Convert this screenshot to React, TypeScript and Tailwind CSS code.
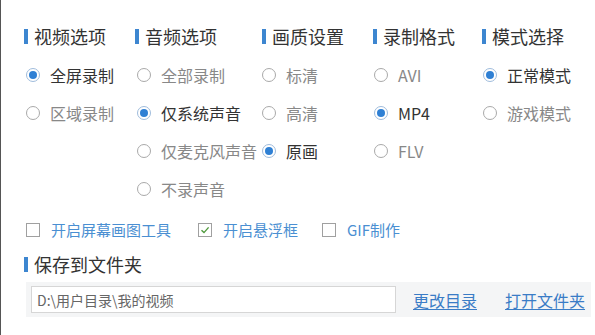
import type { ReactNode } from 'react';

const FONT = { fontFamily: '"Noto Sans CJK SC", "Noto Sans", sans-serif' };

type Col = { title: string; width: string; offset: string; items: { label: string; on?: boolean }[] };

const COLS: Col[] = [
  { title: '视频选项', width: 'w-[111px]', offset: 'pl-[2px]', items: [{ label: '全屏录制', on: true }, { label: '区域录制' }] },
  {
    title: '音频选项',
    width: 'w-[127px]',
    offset: 'pl-[2px]',
    items: [{ label: '全部录制' }, { label: '仅系统声音', on: true }, { label: '仅麦克风声音' }, { label: '不录声音' }],
  },
  { title: '画质设置', width: 'w-[111px]', offset: 'pl-[0px]', items: [{ label: '标清' }, { label: '高清' }, { label: '原画', on: true }] },
  { title: '录制格式', width: 'w-[109px]', offset: 'pl-[1px]', items: [{ label: 'AVI' }, { label: 'MP4', on: true }, { label: 'FLV' }] },
  { title: '模式选择', width: 'w-[110px]', offset: 'pl-[1px]', items: [{ label: '正常模式', on: true }, { label: '游戏模式' }] },
];

function Heading({ children }: { children: ReactNode }) {
  return (
    <div className="flex items-center h-[24px] gap-[6px]">
      <span className="w-[4px] h-[15px] bg-[#3d86d0]" />
      <span className="text-[18px] leading-[24px] text-[#333] whitespace-nowrap">{children}</span>
    </div>
  );
}

function Radio({ on }: { on?: boolean }) {
  return (
    <span
      className={`w-[14px] h-[14px] rounded-full border shrink-0 grid place-items-center bg-white ${
        on ? 'border-[#9fbcdc]' : 'border-[#a9a9a9]'
      }`}
    >
      {on && <span className="w-[8px] h-[8px] rounded-full bg-[#2f80d4]" />}
    </span>
  );
}

function Check({ on, label }: { on?: boolean; label: string }) {
  return (
    <div className="flex items-center gap-[11px]">
      <span className="w-[14px] h-[14px] border border-[#a0a0a0] bg-white grid place-items-center shrink-0">
        {on && (
          <svg width="10" height="10" viewBox="0 0 10 10">
            <path d="M1.5 5.2 L4 7.6 L8.6 2.4" fill="none" stroke="#4f9a3c" strokeWidth="1.4" />
          </svg>
        )}
      </span>
      <span className="text-[15px] leading-[24px] text-[#4a8fd2] whitespace-nowrap">{label}</span>
    </div>
  );
}

export default function App() {
  return (
    <div style={FONT} className="w-[595px] h-[335px] bg-white border-l border-[#555] overflow-hidden">
      <div className="pl-[23px] pt-[24px]">
        <div className="flex">
          {COLS.map(c => (
            <div key={c.title} className={`${c.width} shrink-0`}>
              <Heading>{c.title}</Heading>
              <div className={`mt-[8px] ${c.offset}`}>
                {c.items.map(it => (
                  <div key={it.label} className="h-[38px] flex items-center gap-[10px]">
                    <Radio on={it.on} />
                    <span
                      className={`text-[16px] leading-[20px] whitespace-nowrap ${
                        it.on ? 'text-[#333]' : 'text-[#888]'
                      }`}
                    >
                      {it.label}
                    </span>
                  </div>
                ))}
              </div>
            </div>
          ))}
        </div>

        <div className="flex items-center h-[24px] mt-[10px] pl-[2px]">
          <div className="w-[172px]">
            <Check label="开启屏幕画图工具" />
          </div>
          <div className="w-[124px]">
            <Check on label="开启悬浮框" />
          </div>
          <Check label="GIF制作" />
        </div>

        <div className="mt-[10px]">
          <Heading>保存到文件夹</Heading>
        </div>

        <div className="mt-[6px] ml-[2px] w-[565px] h-[35px] bg-[#f4f5f6] flex items-center pl-[5px]">
          <div className="w-[365px] h-[27px] bg-white border border-[#d6d6d6] flex items-center pl-[5px]">
            <span className="text-[14px] text-[#666] leading-[20px]">D:\用户目录\我的视频</span>
          </div>
          <a className="ml-[17px] text-[16px] leading-[20px] text-[#3a7cc6] underline underline-offset-2 whitespace-nowrap">
            更改目录
          </a>
          <a className="ml-[28px] text-[16px] leading-[20px] text-[#3a7cc6] underline underline-offset-2 whitespace-nowrap">
            打开文件夹
          </a>
        </div>
      </div>
    </div>
  );
}
